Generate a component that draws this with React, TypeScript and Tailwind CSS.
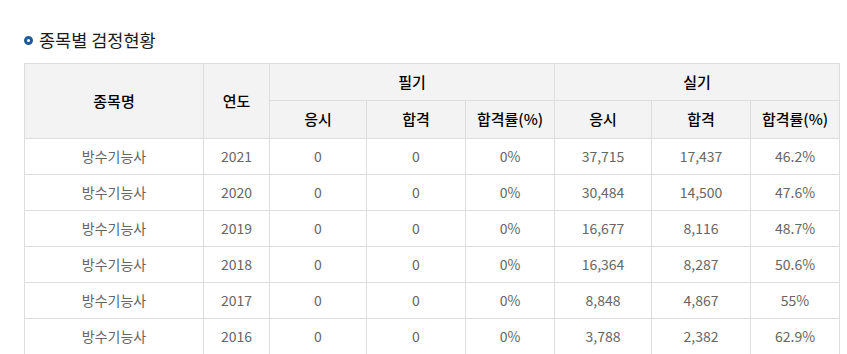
const rows = [
  { name: "방수기능사", year: "2021", w1: "0", w2: "0", w3: "0%", p1: "37,715", p2: "17,437", p3: "46.2%" },
  { name: "방수기능사", year: "2020", w1: "0", w2: "0", w3: "0%", p1: "30,484", p2: "14,500", p3: "47.6%" },
  { name: "방수기능사", year: "2019", w1: "0", w2: "0", w3: "0%", p1: "16,677", p2: "8,116", p3: "48.7%" },
  { name: "방수기능사", year: "2018", w1: "0", w2: "0", w3: "0%", p1: "16,364", p2: "8,287", p3: "50.6%" },
  { name: "방수기능사", year: "2017", w1: "0", w2: "0", w3: "0%", p1: "8,848", p2: "4,867", p3: "55%" },
  { name: "방수기능사", year: "2016", w1: "0", w2: "0", w3: "0%", p1: "3,788", p2: "2,382", p3: "62.9%" },
];

const th = "border border-[#dddddd] bg-[#f3f3f3] font-medium text-[15px] text-black p-0";
const td = "border border-[#dddddd] h-[36px] p-0 text-center text-[14px] text-[#666666]";

export default function App() {
  return (
    <div
      className="min-h-screen bg-white pl-[24px] pt-[27px]"
      style={{ fontFamily: '"Noto Sans CJK KR", "Noto Sans", sans-serif' }}
    >
      <h2 className="flex items-center gap-[6px] text-[17.5px] font-normal leading-[26px] text-[#1a1a1a]">
        <span className="inline-block h-[9px] w-[9px] rounded-full border-[3px] border-[#1f5b9b] bg-white" />
        종목별 검정현황
      </h2>

      <table className="mt-[10px] w-[816px] table-fixed border-collapse">
        <colgroup>
          <col className="w-[179px]" />
          <col className="w-[66px]" />
          <col className="w-[97px]" />
          <col className="w-[99px]" />
          <col className="w-[89px]" />
          <col className="w-[97px]" />
          <col className="w-[99px]" />
          <col className="w-[89px]" />
        </colgroup>
        <thead>
          <tr className="h-[37px]">
            <th rowSpan={2} className={th}>종목명</th>
            <th rowSpan={2} className={th}>연도</th>
            <th colSpan={3} className={th}>필기</th>
            <th colSpan={3} className={th}>실기</th>
          </tr>
          <tr className="h-[38px]">
            <th className={th}>응시</th>
            <th className={th}>합격</th>
            <th className={th}>합격률(%)</th>
            <th className={th}>응시</th>
            <th className={th}>합격</th>
            <th className={th}>합격률(%)</th>
          </tr>
        </thead>
        <tbody>
          {rows.map((r) => (
            <tr key={r.year}>
              <td className={td}>{r.name}</td>
              <td className={td}>{r.year}</td>
              <td className={td}>{r.w1}</td>
              <td className={td}>{r.w2}</td>
              <td className={td}>{r.w3}</td>
              <td className={td}>{r.p1}</td>
              <td className={td}>{r.p2}</td>
              <td className={td}>{r.p3}</td>
            </tr>
          ))}
        </tbody>
      </table>
    </div>
  );
}
